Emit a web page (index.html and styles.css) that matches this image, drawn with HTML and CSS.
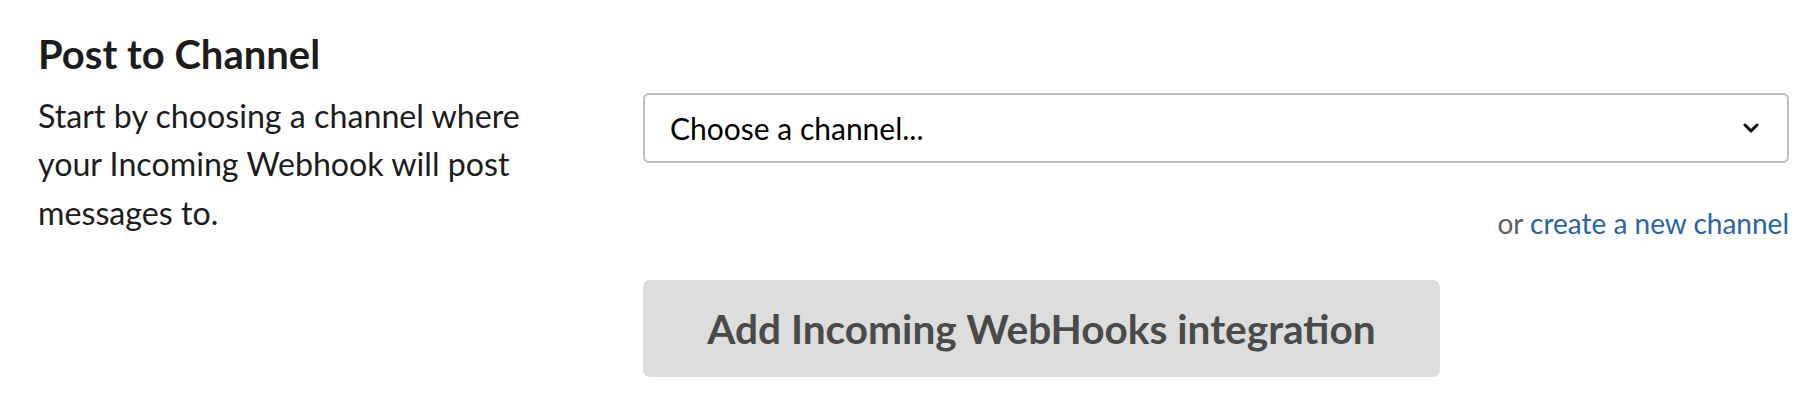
FILE: index.html
```html
<!DOCTYPE html>
<html lang="en">
<head>
<meta charset="utf-8">
<title>Post to Channel</title>
<link rel="stylesheet" href="styles.css">
</head>
<body>
<section class="section">
  <div class="intro">
    <h2 class="title">Post to Channel</h2>
    <p class="desc">Start by choosing a channel where your Incoming Webhook will post messages to.</p>
  </div>
  <div class="controls">
    <div class="select">
      <span class="select-text">Choose a channel...</span>
      <svg class="chevron" width="16" height="10" viewBox="0 0 16 10" aria-hidden="true">
        <path d="M2 2 L8 8 L14 2" fill="none" stroke="#000" stroke-width="3" stroke-linecap="round" stroke-linejoin="round"/>
      </svg>
    </div>
    <p class="hint">or <a class="link" href="#">create a new channel</a></p>
    <button class="btn" type="button">Add Incoming WebHooks integration</button>
  </div>
</section>
</body>
</html>
```
FILE: styles.css
```css
html, body {
  margin: 0;
  padding: 0;
  background: #ffffff;
}
body {
  font-family: Lato, "Noto Sans", sans-serif;
  color: #1d1c1d;
}
.section {
  display: flex;
  padding: 29.5px 29px 0 38px;
}
.intro {
  width: 567px;
  flex: none;
  margin-right: 38px;
}
.title {
  margin: 0;
  font-size: 40px;
  line-height: 48px;
  font-weight: 700;
}
.desc {
  margin: 14px 0 0;
  font-size: 32.2px;
  line-height: 48.5px;
  width: 545px;
}
.controls {
  flex: 1;
  padding-top: 63.5px;
  display: flex;
  flex-direction: column;
  align-items: flex-start;
}
.select {
  box-sizing: border-box;
  width: 100%;
  height: 70px;
  border: 2px solid #bdbdbd;
  border-radius: 6px;
  display: flex;
  align-items: center;
  justify-content: space-between;
  padding: 0 28px 0 25px;
}
.select-text {
  font-size: 30px;
  color: #000;
}
.chevron {
  display: block;
}
.hint {
  align-self: stretch;
  text-align: right;
  margin: 39.5px 0 0;
  font-size: 28px;
  line-height: 40px;
  color: #616061;
}
.link {
  color: #2a64a4;
  text-decoration: none;
}
.btn {
  margin-top: 37.5px;
  width: 797px;
  height: 97px;
  border: none;
  border-radius: 7px;
  background: #dddddd;
  color: #4a4a4a;
  font-family: Lato, "Noto Sans", sans-serif;
  font-weight: 700;
  font-size: 40.6px;
  padding: 0;
}
```
